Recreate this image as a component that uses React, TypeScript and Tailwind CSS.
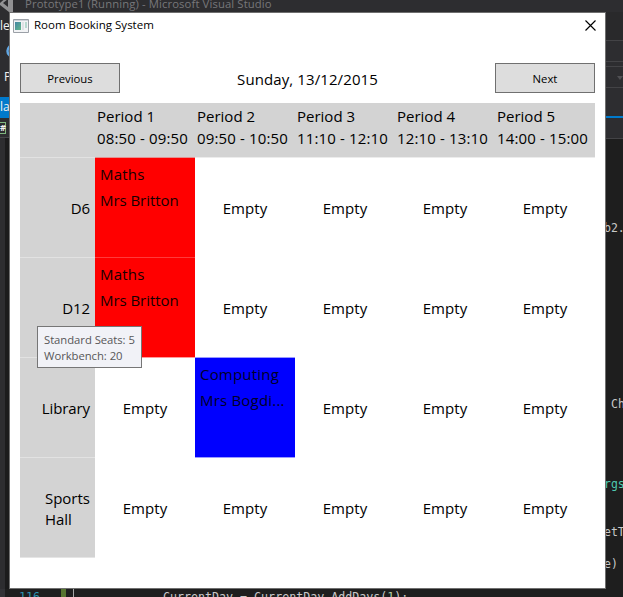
import React from "react";

type Booking = { title: string; teacher: string; kind: "red" | "blue" };

const periods = [
  ["Period 1", "08:50 - 09:50"],
  ["Period 2", "09:50 - 10:50"],
  ["Period 3", "11:10 - 12:10"],
  ["Period 4", "12:10 - 13:10"],
  ["Period 5", "14:00 - 15:00"],
];

const maths: Booking = { title: "Maths", teacher: "Mrs Britton", kind: "red" };
const computing: Booking = { title: "Computing", teacher: "Mrs Bogdi...", kind: "blue" };

const rooms: { name: string; lines: string[]; slots: (Booking | null)[]; edges: string[] }[] = [
  { name: "D6", lines: ["D6"], slots: [maths, null, null, null, null], edges: ["border-[#e59090]", "border-[#ececec]", "border-[#ececec]", "border-[#ececec]", "border-[#ececec]"] },
  { name: "D12", lines: ["D12"], slots: [maths, null, null, null, null], edges: ["border-[#ff3b3b]", "border-white", "border-white", "border-white", "border-white"] },
  { name: "Library", lines: ["Library"], slots: [null, computing, null, null, null], edges: ["border-[#ff9a9a]", "border-[#9a9aff]", "border-white", "border-white", "border-white"] },
  { name: "Sports", lines: ["Sports", "Hall"], slots: [null, null, null, null, null], edges: ["border-white", "border-[#9a9aff]", "border-white", "border-white", "border-white"] },
];

function Slot({ booking, edge }: { booking: Booking | null; edge: string }) {
  if (!booking) {
    return (
      <div className={`flex h-[100px] w-[100px] items-center justify-center border-t pt-px tracking-[0.05px] ${edge}`}>
        Empty
      </div>
    );
  }
  return (
    <div
      className={`h-[100px] w-[100px] border-t pl-[5px] pt-[3px] leading-[26px] ${edge} ${
        booking.kind === "red" ? "bg-[#ff0000] text-[#160000]" : "bg-[#0000ff] text-[#000028]"
      }`}
    >
      <div className="tracking-[0.2px]">{booking.title}</div>
      <div className={booking.kind === "red" ? "tracking-[-0.05px]" : "tracking-[0.2px]"}>{booking.teacher}</div>
    </div>
  );
}

function LeftEdge() {
  return (
    <div className="flex h-[577px] w-[9px] shrink-0 flex-col overflow-hidden bg-[#2d2d30] text-[12px] leading-4 text-[#f1f1f1]">
      <div className="h-[32px] pt-[6px]">le</div>
      <svg className="h-[22px] w-[9px] shrink-0" viewBox="0 0 9 22">
        <circle cx="13" cy="7" r="5.5" fill="none" stroke="#62a8e5" strokeWidth="2.5" />
      </svg>
      <div className="h-[31px] pl-[4px] pt-[3px]">P</div>
      <div className="h-[21px] shrink-0 bg-[#007acc] pt-[2px]">la</div>
      <div className="flex h-[20px] shrink-0 items-center border-b border-[#46464a]">
        <div className="-ml-1 h-[12px] w-[10px] border border-[#7fb77f] pl-[3px] text-[9px] font-bold leading-[10px]">#</div>
      </div>
      <div className="ml-[5px] flex-1 bg-[#1b1b1c]" />
    </div>
  );
}

function RightEdge() {
  return (
    <div className="flex h-[577px] w-[17px] shrink-0 flex-col overflow-hidden whitespace-nowrap bg-[#1e1e1e] font-['DejaVu_Sans_Mono',monospace] text-[11.5px] leading-4 text-[#c8c8c8]">
      <div className="h-[29px] shrink-0 border-b border-[#434346] bg-[#29292b]" />
      <div className="h-[21px] shrink-0 border-b border-[#434346] bg-[#2d2d30]" />
      <div className="h-[5px] shrink-0 border-b border-[#434346] bg-[#2d2d30]" />
      <div className="flex h-[21px] shrink-0 justify-end border-b border-[#434346] bg-[#2d2d30] pt-[9px]">
        <svg width="6" height="4" viewBox="0 0 6 4"><path d="M0 0h6L3 4z" fill="#505053" /></svg>
      </div>
      <div className="h-[28px] shrink-0 bg-[#2d2d30]" />
      <div className="h-[2px] shrink-0 bg-[#007acc]" />
      <div className="h-[21px] shrink-0 border-b border-[#434346] bg-[#2d2d30]" />
      <div className="mt-[81px] h-4 shrink-0"><span className="-ml-[2px]">b2.</span></div>
      <div className="mt-[160px] h-4 shrink-0 pl-[5px]">Ch</div>
      <div className="mt-[64px] h-4 shrink-0 text-[#4ec9b0]"><span className="-ml-[2px]">rgs</span></div>
      <div className="mt-[32px] h-4 shrink-0"><span className="-ml-[2px]">etT</span></div>
      <div className="mt-[16px] h-4 shrink-0"><span className="-ml-[2px]">e)</span></div>
    </div>
  );
}

export default function App() {
  return (
    <div className="h-[597px] w-[623px] overflow-hidden bg-[#2d2d30] font-['Open_Sans','Noto_Sans',sans-serif]">
      <div className="flex h-[12px] overflow-hidden text-[11.3px] leading-4 text-[#77777a]">
        <svg className="mr-[12px] h-[12px] w-[13px] shrink-0" viewBox="0 0 13 12">
          <path d="M0 3L8 -4L13 -2V12H9L0 5Z" fill="#929294" />
          <path d="M3 3L8 -1V7Z" fill="#2d2d30" />
        </svg>
        <div className="-mt-[4px] whitespace-nowrap tracking-[0.11px]">Prototype1 (Running) - Microsoft Visual Studio</div>
      </div>

      <div className="flex h-[577px]">
        <LeftEdge />
        <main className="relative h-[577px] w-[597px] shrink-0 border border-[#6f6f6f] bg-white text-[15px] text-black">
          <header className="flex h-[24px] items-center pl-[3px] pr-[10px]">
            <svg width="16" height="14" viewBox="0 0 16 14" className="mt-px">
              <defs>
                <linearGradient id="pane" x1="0" y1="0" x2="1" y2="1">
                  <stop offset="0" stopColor="#4586a5" />
                  <stop offset="1" stopColor="#62b789" />
                </linearGradient>
              </defs>
              <path d="M.5.5h15v13H.5z" fill="#f2f3f5" stroke="#9ba0a7" />
              <path d="M1 1h14v1H1z" fill="#d0d4da" />
              <path d="M2 3h6v8H2z" fill="url(#pane)" />
              <path d="M9 3h2v8H9z" fill="#dfe2e5" />
              <path d="M12 3h2v6h-2z" fill="#b8d8cf" />
            </svg>
            <h1 className="ml-[5px] text-[11.5px] leading-4">Room Booking System</h1>
            <svg className="-mr-px ml-auto" width="12" height="11" viewBox="0 0 12 11">
              <path d="M1.5.5l10 10M11.5.5l-10 10" stroke="#000" strokeWidth="1.15" />
            </svg>
          </header>

          <nav className="mx-[10px] mt-[26px] flex h-[30px] items-center justify-between">
            <button className="h-[30px] w-[100px] border border-[#707070] bg-[#dddddd] pt-[2px] text-[11.3px] leading-4">Previous</button>
            <div className="pt-[2px] tracking-[0.1px]">Sunday, 13/12/2015</div>
            <button className="h-[30px] w-[100px] border border-[#707070] bg-[#dddddd] pt-[2px] text-[11.3px] leading-4">Next</button>
          </nav>

          <section className="mx-[10px] mt-[10px] w-[575px]">
            <div className="flex h-[54px] bg-[#d3d3d3] pl-[75px]">
              {periods.map(([name, time]) => (
                <div key={name} className="w-[100px] whitespace-nowrap pl-[2px] pt-[2px] leading-[22px]">
                  <div>{name}</div>
                  <div className="tracking-[0.14px]">{time}</div>
                </div>
              ))}
            </div>
            {rooms.map((room) => (
              <div key={room.name} className="flex h-[100px]">
                <div
                  className={`flex w-[75px] items-center justify-end border-t border-[#e2e2e2] bg-[#d3d3d3] pr-[5px] leading-[21px] ${
                    room.lines.length > 1 ? "pt-[3px]" : "pt-px tracking-[-0.1px]"
                  }`}
                >
                  <div>
                    {room.lines.map((line) => <div key={line}>{line}</div>)}
                  </div>
                </div>
                {room.slots.map((booking, i) => <Slot key={i} booking={booking} edge={room.edges[i]} />)}
              </div>
            ))}
            <div className="h-px w-[75px] bg-[#e5e5e5]" />
          </section>

          <div className="absolute left-[27px] top-[313px] h-[42px] w-[105px] whitespace-nowrap border border-[#767676] bg-[#f1f2f7] pl-[6px] pt-[5px] text-[11.3px] leading-4 tracking-[-0.05px] text-[#575757]">
            <div>Standard Seats: 5</div>
            <div>Workbench: 20</div>
          </div>
        </main>
        <RightEdge />
      </div>

      <div className="flex h-[8px] overflow-hidden bg-[#1e1e1e] font-['DejaVu_Sans_Mono',monospace] text-[11.65px] leading-4 text-[#c8c8c8]">
        <div className="h-[8px] w-[5px] bg-[#333337]" />
        <div className="w-[56px] pl-[14px] text-[#2b91af]">116</div>
        <div className="h-[8px] w-[5px] bg-[#577430]" />
        <div className="ml-[7px] h-[8px] w-px bg-[#a5a5a5]" />
        <div className="ml-[89px] whitespace-nowrap">
          CurrentDay = CurrentDay.AddDays(<span className="text-[#b5cea8]">1</span>);
        </div>
      </div>
    </div>
  );
}
